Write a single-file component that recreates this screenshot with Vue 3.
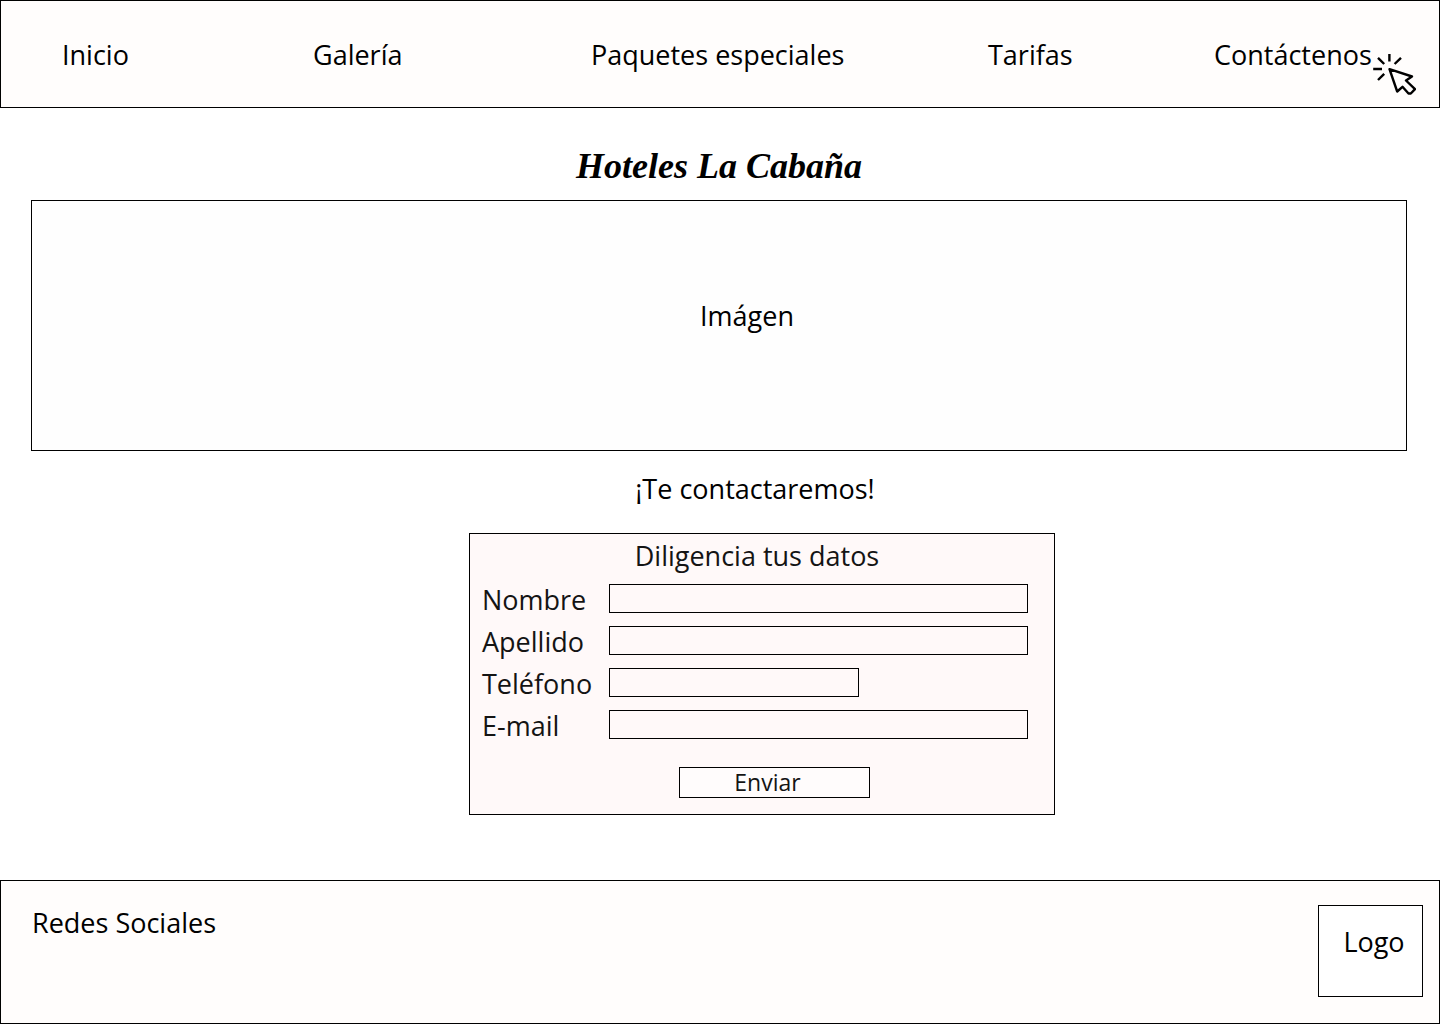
<script setup>
import { ref } from 'vue'

const links = [
  { text: 'Inicio', href: '#inicio' },
  { text: 'Galería', href: '#galeria' },
  { text: 'Paquetes especiales', href: '#paquetes' },
  { text: 'Tarifas', href: '#tarifas' },
  { text: 'Contáctenos', href: '#contactenos' }
]

const fields = [
  { id: 'nombre', label: 'Nombre', type: 'text' },
  { id: 'apellido', label: 'Apellido', type: 'text' },
  { id: 'telefono', label: 'Teléfono', type: 'tel', short: true },
  { id: 'email', label: 'E-mail', type: 'email' }
]

const form = ref({ nombre: '', apellido: '', telefono: '', email: '' })
</script>

<template>
  <div class="page">
    <header class="bar">
      <nav class="nav">
        <a v-for="link in links" :key="link.href" :href="link.href">{{ link.text }}</a>
      </nav>
      <svg class="pointer" viewBox="0 0 44 42" fill="none" stroke="#000" stroke-width="2.4" stroke-linejoin="round" aria-hidden="true">
        <path d="M17.400 1V8.600M6 4.800L12.200 11M29 4.800L22.600 11M1.200 16H10M12.200 20.800L6 27" />
        <path d="M17.500 16.200L40 23.500L34 27.500L43 36.200L38.800 40.500H36.500L30.500 33.800L25.200 38.500Z" />
      </svg>
    </header>

    <main class="content">
      <h1 class="title">Hoteles La Cabaña</h1>
      <div class="hero">Imágen</div>
      <h2 class="lead">¡Te contactaremos!</h2>

      <form class="card" @submit.prevent>
        <h3 class="card-title">Diligencia tus datos</h3>
        <div class="fields">
          <div v-for="field in fields" :key="field.id" class="field">
            <label :for="field.id">{{ field.label }}</label>
            <input :id="field.id" v-model="form[field.id]" :type="field.type" :class="{ short: field.short }">
          </div>
        </div>
        <button type="submit" class="send">Enviar</button>
      </form>
    </main>

    <footer class="footer">
      <p>Redes Sociales</p>
      <div class="logo">Logo</div>
    </footer>
  </div>
</template>

<style>
body {
  margin: 0;
  background: #fff;
}
</style>

<style scoped>
.page,
.page * {
  box-sizing: border-box;
}

.page {
  display: flex;
  flex-direction: column;
  min-height: 100vh;
  font-family: "Open Sans", "Noto Sans", sans-serif;
  font-size: 27px;
  line-height: 36px;
  color: #000;
}

h1,
h2,
h3,
p {
  margin: 0;
  font-size: inherit;
  font-weight: 400;
}

.bar {
  position: relative;
  padding: 36px 0 34px 61px;
  border: 1px solid #000;
  background: #fffdfc;
}

.nav {
  display: grid;
  grid-template-columns: 251fr 278fr 397fr 226fr 225fr;
}

.nav a {
  color: inherit;
  text-decoration: none;
  white-space: nowrap;
}

.pointer {
  position: absolute;
  right: 23px;
  bottom: 12px;
  width: 44px;
  height: 42px;
}

.content {
  display: flex;
  flex: 1;
  flex-direction: column;
  padding: 36px 33px 65px 31px;
}

.title {
  padding-bottom: 12px;
  font-family: "Liberation Serif", serif;
  font-size: 36px;
  font-style: italic;
  font-weight: 700;
  line-height: 44px;
  text-align: center;
}

.hero {
  display: flex;
  justify-content: center;
  height: 251px;
  padding: 97px 0 0 56px;
  border: 1px solid #000;
  background: #fefefe;
}

.lead {
  padding: 20px 0 26px 72px;
  text-align: center;
}

.card {
  display: flex;
  flex-direction: column;
  width: 586px;
  max-width: 100%;
  margin-left: calc(50% - 250px);
  padding: 4px 26px 16px 12px;
  border: 1px solid #000;
  background: #fff9f9;
  color: #141414;
}

.card-title {
  padding-left: 4px;
  text-align: center;
}

.fields {
  display: flex;
  flex-direction: column;
  gap: 13px;
  margin-top: 10px;
}

.field {
  display: flex;
  align-items: center;
  height: 29px;
}

.field label {
  flex: none;
  width: 127px;
  padding-top: 2px;
}

.field input {
  flex: 1;
  min-width: 0;
  height: 29px;
  padding: 0 8px;
  border: 1px solid #000;
  border-radius: 0;
  background: transparent;
  font: inherit;
  font-size: 20px;
}

.field input.short {
  flex: none;
  width: 250px;
}

.send {
  width: 191px;
  height: 31px;
  margin: 28px 0 0 197px;
  padding: 0 14px 0 0;
  border: 1px solid #000;
  border-radius: 0;
  background: #fffcfc;
  color: inherit;
  font: inherit;
  font-size: 23px;
  line-height: 29px;
}

.footer {
  display: flex;
  justify-content: space-between;
  min-height: 144px;
  padding: 24px 16px 26px 31px;
  border: 1px solid #000;
  background: #fffdfc;
}

.logo {
  width: 105px;
  height: 92px;
  padding: 18px 0 0 7px;
  border: 1px solid #000;
  background: #fff;
  text-align: center;
}
</style>
